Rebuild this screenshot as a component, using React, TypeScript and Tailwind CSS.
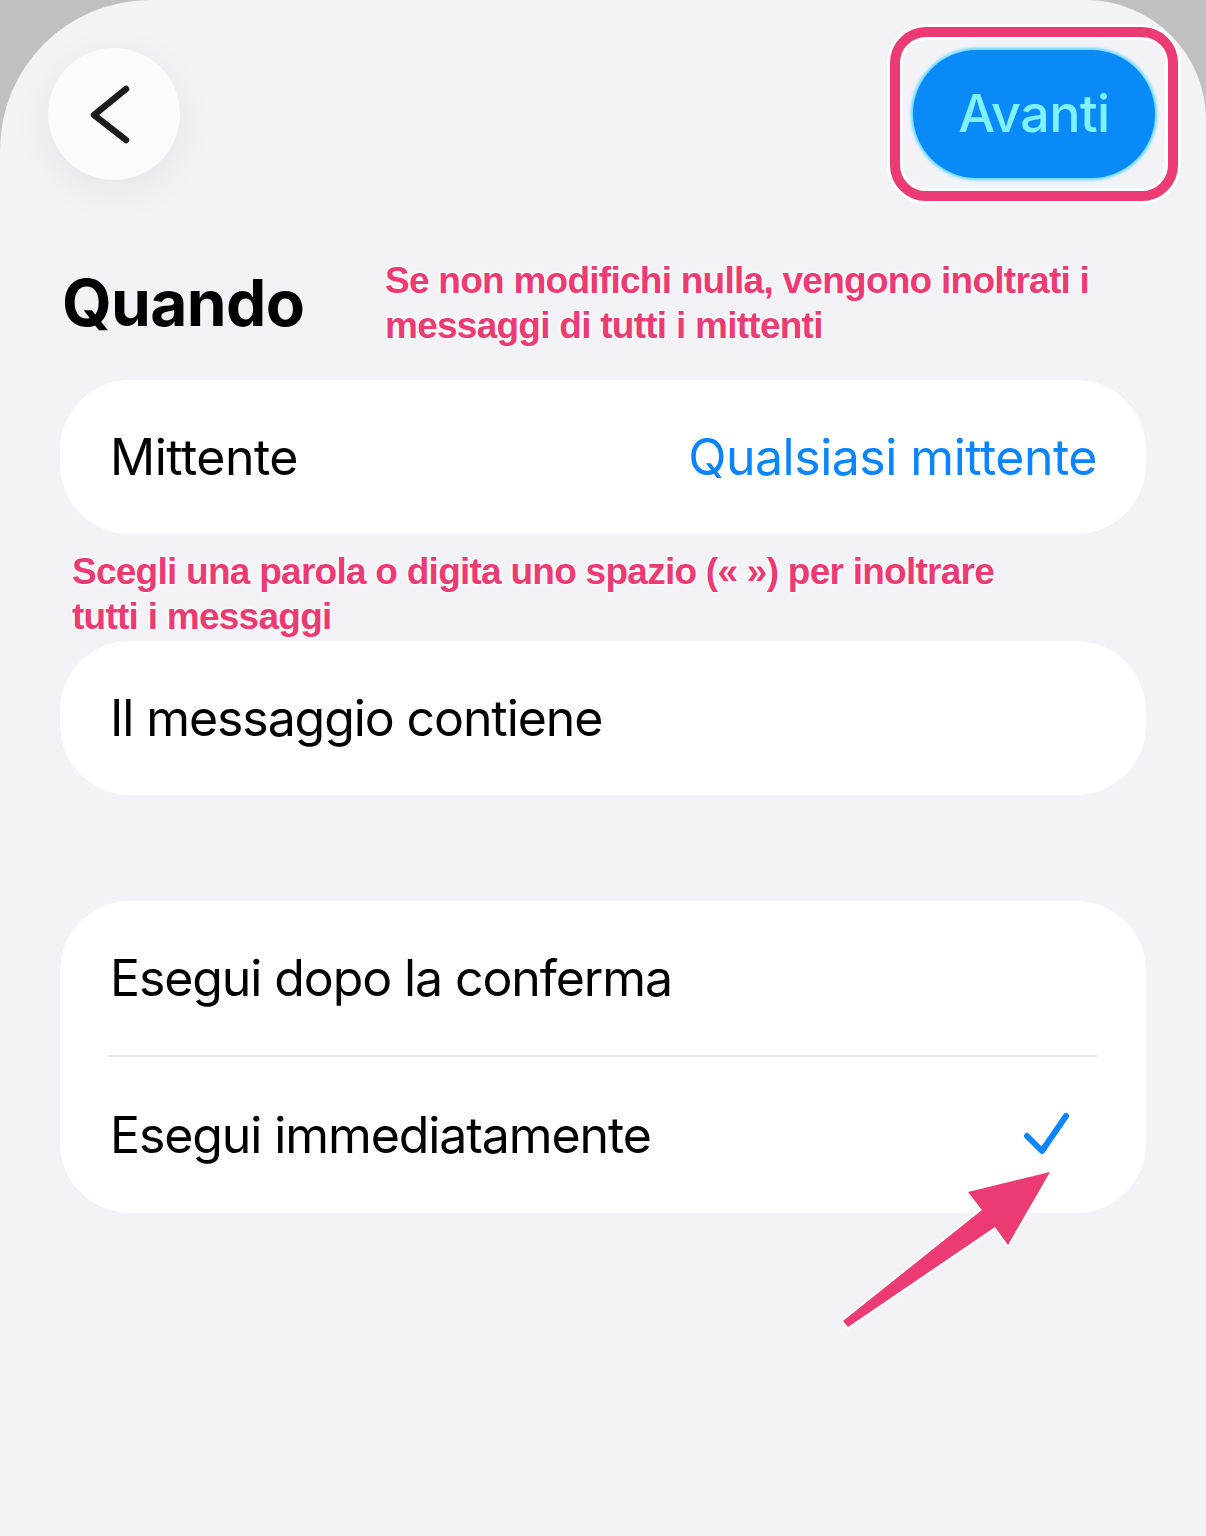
import React from "react";

const note =
  "font-['Liberation_Sans',Arial,sans-serif] font-bold text-[#ec3a73] text-[37px] leading-[45px] tracking-[-0.02em] whitespace-nowrap [text-shadow:0_0_2px_#fff,0_0_2px_#fff,0_0_3px_#fff,0_0_3px_#fff,0_0_4px_#fff]";

function BackButton() {
  return (
    <button className="mt-[21px] flex h-[132px] w-[132px] items-center justify-center rounded-full bg-[#fbfbfd] shadow-[0_10px_40px_rgba(0,0,0,0.06)]">
      <svg width="132" height="132" viewBox="0 0 132 132" fill="none">
        <path
          d="M78 41 L46 67 L78 92"
          stroke="#1c1c1e"
          strokeWidth="6.5"
          strokeLinecap="round"
          strokeLinejoin="round"
        />
      </svg>
    </button>
  );
}

function Check() {
  return (
    <svg width="50" height="46" viewBox="0 0 50 46" fill="none">
      <path
        d="M5 24 L20 39 L44 4"
        stroke="#0a84ff"
        strokeWidth="6"
        strokeLinecap="round"
        strokeLinejoin="round"
      />
    </svg>
  );
}

export default function App() {
  return (
    <div className="relative min-h-[1536px] bg-[#bfbfc4] font-['Inter','Noto_Sans',sans-serif]">
      <div className="min-h-[1536px] rounded-tl-[150px] rounded-tr-[120px] bg-[#f2f2f7]">
        {/* header */}
        <div className="flex items-start justify-between pl-[48px] pr-[28px] pt-[27px]">
          <BackButton />
          <div className="rounded-[36px] border-[10px] border-[#ec3a73] p-[13px] shadow-[0_0_0_3px_#fff,inset_0_0_0_3px_#fff]">
            <button className="flex h-[128px] w-[242px] items-center justify-center rounded-full bg-[#0a8af6] shadow-[0_0_3px_2px_#5fd6ff] text-[52px] font-medium tracking-[-0.01em] text-[#7ef3ff]">
              Avanti
            </button>
          </div>
        </div>

        {/* title */}
        <div className="mt-[57px] flex items-center">
          <h1 className="w-[385px] pl-[62px] text-[64px] font-bold leading-none tracking-[-0.01em] text-black">
            Quando
          </h1>
          <p className={note}>
            Se non modifichi nulla, vengono inoltrati i
            <br />
            messaggi di tutti i mittenti
          </p>
        </div>

        {/* sender */}
        <div className="mx-[60px] mt-[32px] flex h-[154px] items-center justify-between rounded-[70px] bg-white pl-[50px] pr-[49px] text-[50px] tracking-[-0.01em]">
          <span className="text-black">Mittente</span>
          <span className="text-[#0a84ff]">Qualsiasi mittente</span>
        </div>

        <p className={`${note} mt-[15px] pl-[72px]`}>
          Scegli una parola o digita uno spazio (« ») per inoltrare
          <br />
          tutti i messaggi
        </p>

        {/* contains */}
        <div className="mx-[60px] mt-[2px] flex h-[154px] items-center rounded-[70px] bg-white pl-[50px] text-[50px] tracking-[-0.022em] text-black">
          Il messaggio contiene
        </div>

        {/* run mode */}
        <div className="mx-[60px] mt-[106px] rounded-[70px] bg-white text-[50px] tracking-[-0.022em] text-black">
          <div className="flex h-[154px] items-center pl-[50px]">Esegui dopo la conferma</div>
          <div className="ml-[49px] mr-[49px] h-[2px] bg-[#e5e5ea]" />
          <div className="flex h-[156px] items-center justify-between pl-[50px] pr-[74px]">
            <span>Esegui immediatamente</span>
            <Check />
          </div>
        </div>
      </div>

      {/* annotation arrow */}
      <svg
        className="pointer-events-none absolute left-0 top-0"
        width="1206"
        height="1536"
        viewBox="0 0 1206 1536"
      >
        <path
          d="M843 1321 L982 1210 L968 1192 L1050 1172 L1008 1245 L995 1227 L848 1327 Z"
          fill="#ec3a73"
          stroke="#fff"
          strokeWidth="4"
          strokeLinejoin="round"
          paintOrder="stroke"
        />
      </svg>
    </div>
  );
}
